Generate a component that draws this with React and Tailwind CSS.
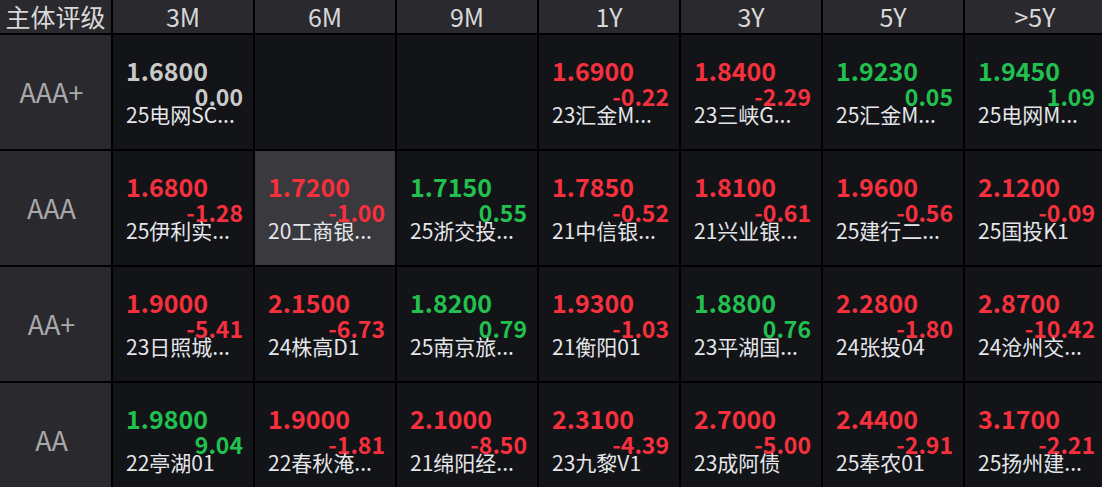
const heads = ['3M', '6M', '9M', '1Y', '3Y', '5Y', '>5Y'];

const rows = [
  {
    grade: 'AAA+',
    cells: [
      { v: '1.6800', c: '0.00', n: '25电网SC...', t: 'flat' },
      null,
      null,
      { v: '1.6900', c: '-0.22', n: '23汇金M...', t: 'down' },
      { v: '1.8400', c: '-2.29', n: '23三峡G...', t: 'down' },
      { v: '1.9230', c: '0.05', n: '25汇金M...', t: 'up' },
      { v: '1.9450', c: '1.09', n: '25电网M...', t: 'up' },
    ],
  },
  {
    grade: 'AAA',
    cells: [
      { v: '1.6800', c: '-1.28', n: '25伊利实...', t: 'down' },
      { v: '1.7200', c: '-1.00', n: '20工商银...', t: 'down', active: true },
      { v: '1.7150', c: '0.55', n: '25浙交投...', t: 'up' },
      { v: '1.7850', c: '-0.52', n: '21中信银...', t: 'down' },
      { v: '1.8100', c: '-0.61', n: '21兴业银...', t: 'down' },
      { v: '1.9600', c: '-0.56', n: '25建行二...', t: 'down' },
      { v: '2.1200', c: '-0.09', n: '25国投K1', t: 'down' },
    ],
  },
  {
    grade: 'AA+',
    cells: [
      { v: '1.9000', c: '-5.41', n: '23日照城...', t: 'down' },
      { v: '2.1500', c: '-6.73', n: '24株高D1', t: 'down' },
      { v: '1.8200', c: '0.79', n: '25南京旅...', t: 'up' },
      { v: '1.9300', c: '-1.03', n: '21衡阳01', t: 'down' },
      { v: '1.8800', c: '0.76', n: '23平湖国...', t: 'up' },
      { v: '2.2800', c: '-1.80', n: '24张投04', t: 'down' },
      { v: '2.8700', c: '-10.42', n: '24沧州交...', t: 'down' },
    ],
  },
  {
    grade: 'AA',
    cells: [
      { v: '1.9800', c: '9.04', n: '22亭湖01', t: 'up' },
      { v: '1.9000', c: '-1.81', n: '22春秋淹...', t: 'down' },
      { v: '2.1000', c: '-8.50', n: '21绵阳经...', t: 'down' },
      { v: '2.3100', c: '-4.39', n: '23九黎V1', t: 'down' },
      { v: '2.7000', c: '-5.00', n: '23成阿债', t: 'down' },
      { v: '2.4400', c: '-2.91', n: '25奉农01', t: 'down' },
      { v: '3.1700', c: '-2.21', n: '25扬州建...', t: 'down' },
    ],
  },
];

const tone = {
  up: 'text-[#22c04f]',
  down: 'text-[#f6303d]',
  flat: 'text-[#c9c9c9]',
};

// 单元格：收益率 / 涨跌BP / 债券简称
const Cell = ({ cell }) => {
  if (!cell) return <div className="bg-[#131418]" />;
  return (
    <div
      className={`flex flex-col pl-[13px] pr-[10px] pt-[23px] ${
        cell.active ? 'bg-[#3a393e]' : 'bg-[#131418]'
      }`}
    >
      <div className={`text-[25px] font-bold leading-[24px] ${tone[cell.t]}`}>{cell.v}</div>
      <div className={`pt-[2px] text-right text-[23px] font-bold leading-[24px] ${tone[cell.t]}`}>{cell.c}</div>
      <div className="-mt-[2px] whitespace-nowrap text-[21px] leading-[16px] text-[#e4e6ea]">{cell.n}</div>
    </div>
  );
};

export default function App() {
  return (
    <div
      className="w-[1102px] h-[487px] overflow-hidden bg-black"
      style={{ fontFamily: '"Noto Sans CJK SC", "Noto Sans", sans-serif' }}
    >
      <div className="grid grid-cols-[111px_repeat(7,140px)] grid-rows-[33px_repeat(4,114px)] gap-[2px]">
        <div className="flex items-center justify-center bg-[#2a292e] text-[25px] leading-[33px] text-[#d8d8d8]">
          主体评级
        </div>
        {heads.map((h) => (
          <div
            key={h}
            className="flex items-center justify-center bg-[#2a292e] text-[25px] leading-[33px] text-[#d8d8d8]"
          >
            {h}
          </div>
        ))}
        {rows.map((row) => (
          <>
            <div
              key={row.grade}
              className="flex items-center justify-center bg-[#2a292e] pr-[8px] text-[27px] text-[#a8a8a8]"
            >
              {row.grade}
            </div>
            {row.cells.map((cell, i) => (
              <Cell key={row.grade + i} cell={cell} />
            ))}
          </>
        ))}
      </div>
    </div>
  );
}
